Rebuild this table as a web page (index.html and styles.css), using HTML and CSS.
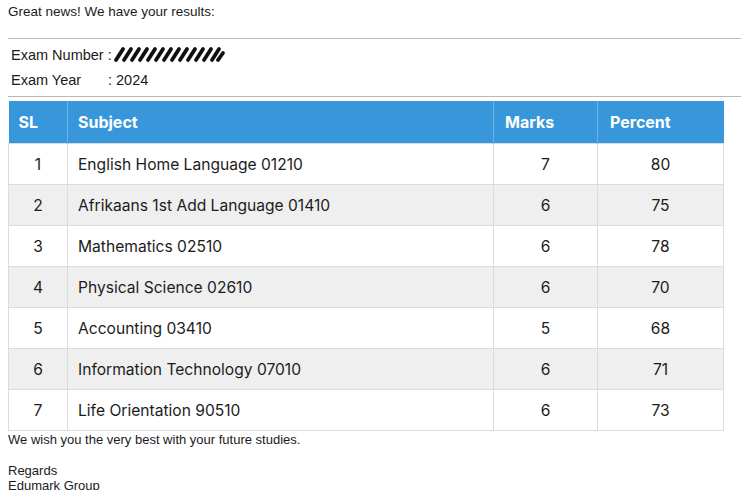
FILE: index.html
```html
<!DOCTYPE html>
<html>
<head>
<meta charset="utf-8">
<link rel="stylesheet" href="styles.css">
</head>
<body>
<p class="intro">Great news! We have your results:</p>
<hr class="rule rule-top">
<div class="info">
  <div class="info-row"><span class="info-label">Exam Number :</span><svg class="mask" width="112" height="18" viewBox="0 0 112 18"><g stroke="#111" stroke-width="3.8" stroke-linecap="round"><line x1="2" y1="15" x2="9" y2="4"/><line x1="10" y1="15" x2="17" y2="4"/><line x1="18" y1="15" x2="25" y2="4"/><line x1="26" y1="15" x2="33" y2="4"/><line x1="34" y1="15" x2="41" y2="4"/><line x1="42" y1="15" x2="49" y2="4"/><line x1="50" y1="15" x2="57" y2="4"/><line x1="58" y1="15" x2="65" y2="4"/><line x1="66" y1="15" x2="73" y2="4"/><line x1="74" y1="15" x2="81" y2="4"/><line x1="82" y1="15" x2="89" y2="4"/><line x1="90" y1="15" x2="97" y2="4"/><line x1="98" y1="15" x2="105" y2="4"/><line x1="104" y1="15" x2="109" y2="8"/></g></svg></div>
  <div class="info-row"><span class="info-label label-year">Exam Year</span><span>: 2024</span></div>
</div>
<hr class="rule rule-bottom">
<table class="results">
  <colgroup><col class="c-sl"><col class="c-subj"><col class="c-marks"><col class="c-pct"></colgroup>
  <thead>
    <tr><th>SL</th><th>Subject</th><th>Marks</th><th>Percent</th></tr>
  </thead>
  <tbody>
    <tr><td class="num">1</td><td>English Home Language 01210</td><td class="num">7</td><td class="num">80</td></tr>
    <tr><td class="num">2</td><td>Afrikaans 1st Add Language 01410</td><td class="num">6</td><td class="num">75</td></tr>
    <tr><td class="num">3</td><td>Mathematics 02510</td><td class="num">6</td><td class="num">78</td></tr>
    <tr><td class="num">4</td><td>Physical Science 02610</td><td class="num">6</td><td class="num">70</td></tr>
    <tr><td class="num">5</td><td>Accounting 03410</td><td class="num">5</td><td class="num">68</td></tr>
    <tr><td class="num">6</td><td>Information Technology 07010</td><td class="num">6</td><td class="num">71</td></tr>
    <tr><td class="num">7</td><td>Life Orientation 90510</td><td class="num">6</td><td class="num">73</td></tr>
  </tbody>
</table>
<p class="outro">We wish you the very best with your future studies.</p>
<p class="sign">Regards<br>Edumark Group</p>
</body>
</html>
```
FILE: styles.css
```css
html, body {
  margin: 0;
  padding: 0;
  background: #fff;
}
body {
  padding: 4px 8px 0 8px;
  font-family: "Liberation Sans", Arial, sans-serif;
  color: #1a1a1a;
  font-size: 13px;
  overflow: hidden;
}
.intro {
  margin: 0;
  font-size: 13.5px;
  line-height: 16px;
}
.rule {
  border: 0;
  height: 1px;
  background: #b8b8b8;
  margin: 0;
}
.rule-top {
  margin-top: 18px;
  width: 733px;
}
.rule-bottom {
  width: 733px;
  margin-top: 4px;
}
.info {
  padding: 4px 0 0 3px;
  font-size: 14.5px;
}
.info-row {
  display: flex;
  align-items: center;
  height: 24px;
}
.info-row + .info-row {
  padding-top: 1px;
}
.info-label {
  white-space: pre;
}
.label-year {
  width: 97px;
}
.mask {
  margin-left: 2px;
  margin-top: -3px;
}
.results {
  border-collapse: collapse;
  table-layout: fixed;
  margin-top: 4px;
  width: 715px;
  font-family: "Inter", "Liberation Sans", sans-serif;
  font-size: 15.6px;
  color: #1c1c1c;
}
.c-sl { width: 59px; }
.c-subj { width: 426px; }
.c-marks { width: 104px; }
.c-pct { width: 126px; }
.results th {
  background: #3797da;
  color: #fff;
  font-weight: 700;
  font-size: 16px;
  text-align: left;
  height: 42px;
  padding: 0 0 0 10px;
  border-left: 1px solid #6fb3e6;
}
.results th:first-child {
  border-left: 0;
}
.results th:nth-child(3) { padding-left: 11px; }
.results th:nth-child(4) { padding-left: 12px; }
.results td {
  height: 40px;
  padding: 0 0 0 10px;
  border: 1px solid #dcdcdc;
}
.results tbody tr:nth-child(even) td {
  background: #efefef;
}
.results td.num {
  text-align: center;
  padding: 0;
}
.outro {
  margin: 1px 0 0 0;
  font-size: 13px;
  line-height: 16px;
}
.sign {
  margin: 15px 0 0 0;
  font-size: 13px;
  line-height: 15px;
}
```
